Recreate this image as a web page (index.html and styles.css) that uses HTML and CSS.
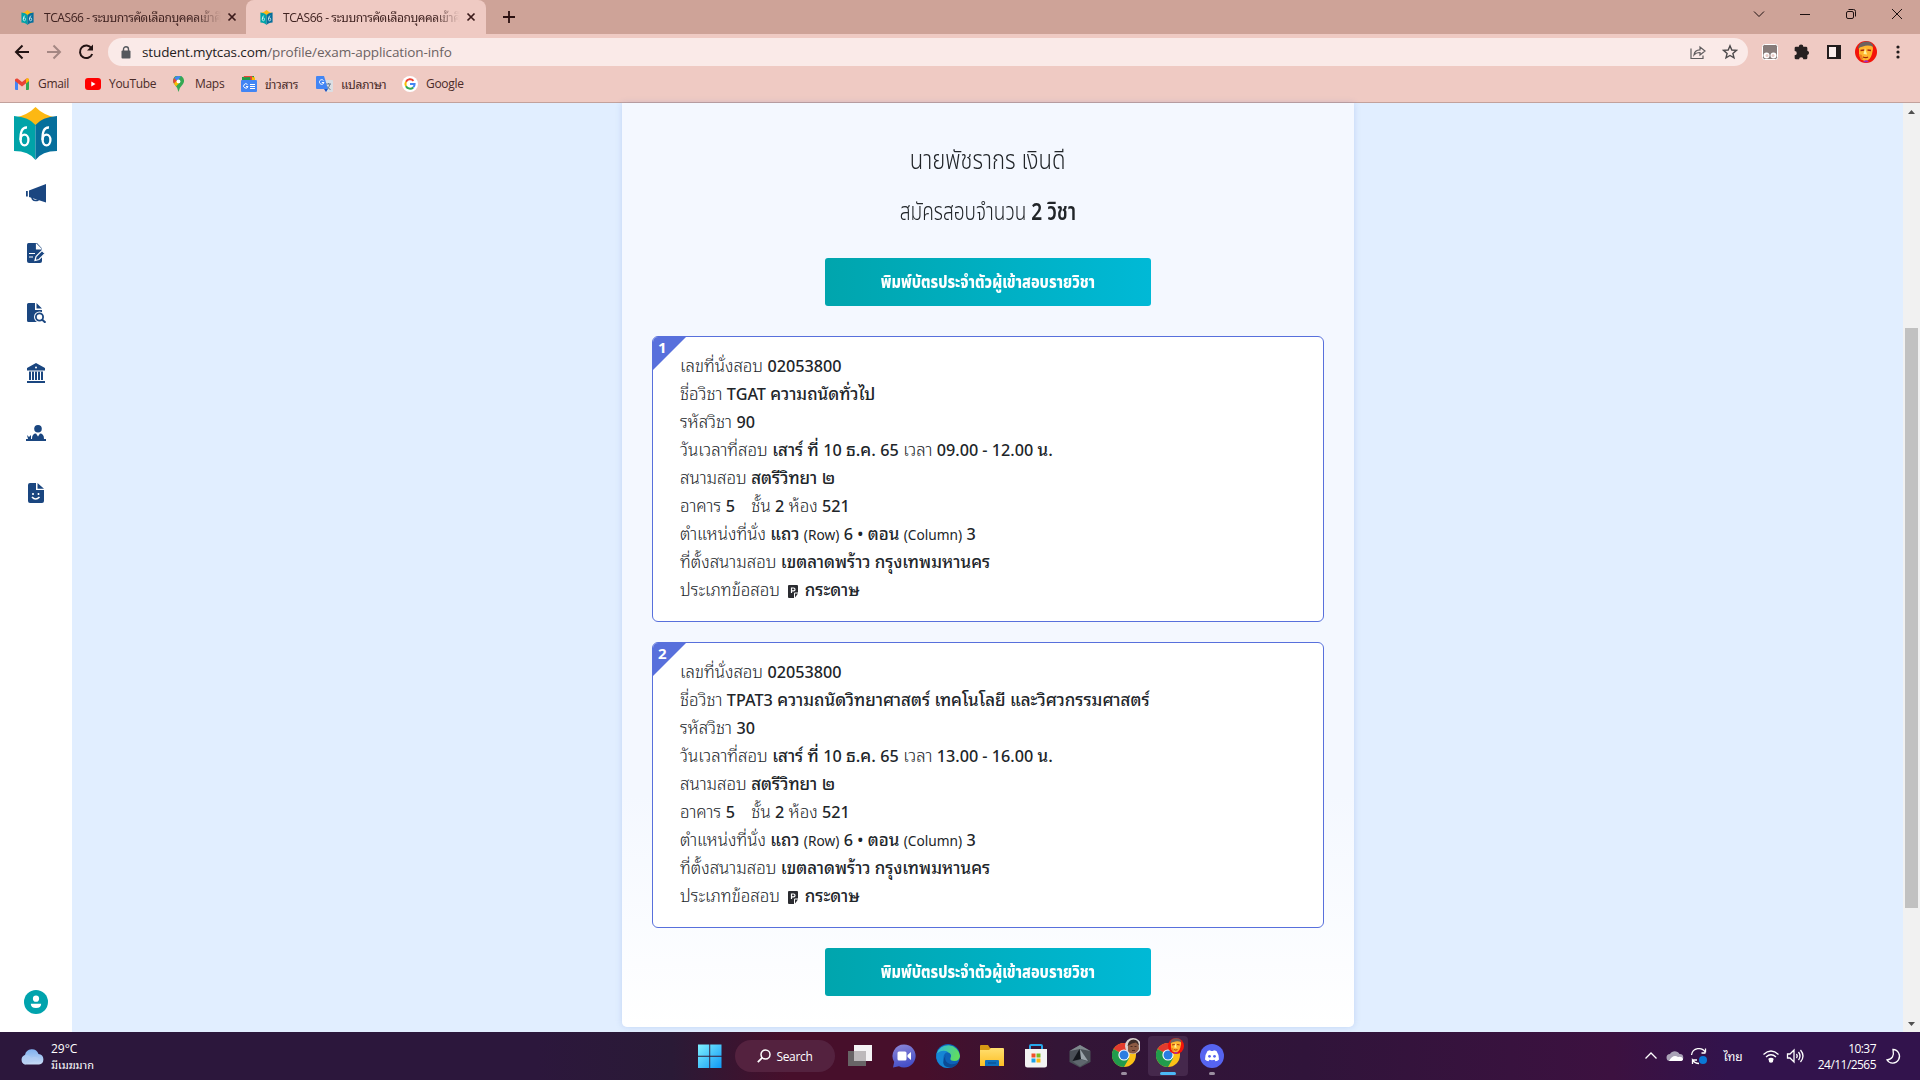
FILE: index.html
```
<!DOCTYPE html>
<html lang="th">
<head>
<meta charset="utf-8">
<title>TCAS66</title>
<link rel="stylesheet" href="styles.css">
</head>
<body>
<svg class="defs" width="0" height="0">
  <defs>
    <linearGradient id="win" x1="0" y1="0" x2="1" y2="1"><stop offset="0" stop-color="#7ff1ff"/><stop offset="1" stop-color="#0f98f5"/></linearGradient>
    <linearGradient id="edgeTop" x1="0" y1="0" x2="1" y2="0.3"><stop offset="0" stop-color="#2bb5e8"/><stop offset="1" stop-color="#60dd60"/></linearGradient>
    <linearGradient id="chat" x1="0" y1="0" x2="0.3" y2="1"><stop offset="0" stop-color="#8f88d8"/><stop offset="1" stop-color="#4650c8"/></linearGradient>
    <linearGradient id="folder" x1="0" y1="0" x2="0" y2="1"><stop offset="0" stop-color="#ffdf70"/><stop offset="1" stop-color="#fdbf25"/></linearGradient>
    <linearGradient id="cloud" x1="0" y1="0" x2="0" y2="1"><stop offset="0" stop-color="#7fb0ee"/><stop offset="1" stop-color="#c9dcf6"/></linearGradient>
    <symbol id="logo" viewBox="0 0 43 53">
      <path d="M0 11 Q14 8 21.500 0 Q29 8 43 11 Q29 11 21.500 19 Q14 11 0 11z" fill="#fdb813"/>
      <path d="M0 9 Q15 10 21.500 18 V53 Q15 44 0 44z" fill="#00a3a8"/>
      <path d="M43 9 Q28 10 21.500 18 V53 Q28 44 43 44z" fill="#066f9c"/>
      <g fill="none" stroke="#fff" stroke-width="2.300"><ellipse cx="10.500" cy="33" rx="3.900" ry="5.300"/><path d="M6.600 33 Q6 20 13 20.500"/><ellipse cx="32.500" cy="33" rx="3.900" ry="5.300"/><path d="M28.600 33 Q28 20 35 20.500"/></g>
    </symbol>
    <symbol id="close" viewBox="0 0 10 10"><path d="M1.500 1.500l7 7m0-7l-7 7" stroke="#3a1a1a" stroke-width="1.700"/></symbol>
    <symbol id="chrome" viewBox="0 0 24 24">
      <circle cx="12" cy="12" r="12" fill="#fbc116"/>
      <path d="M12 12 L1.600 6 A12 12 0 0 1 22.400 6z" fill="#e33b2e"/>
      <path d="M1.600 6 A12 12 0 0 0 12 24 L17.200 15 L12 12z" fill="#219b4c"/>
      <circle cx="12" cy="12" r="5.600" fill="#fff"/><circle cx="12" cy="12" r="4.500" fill="#2a7de1"/>
    </symbol>
    <symbol id="face" viewBox="0 0 22 22">
      <circle cx="11" cy="11" r="11" fill="#f3140a"/>
      <path d="M4 7 Q5 1 12 1.500 Q18 2 18 8 L17 13 Q15 20 10 20 Q5 19 4 13z" fill="#ffb52e"/>
      <path d="M3 8 Q3 1 11 .500 Q17 0 18.500 6 Q13 3.500 8 5.500 Q5 5.500 3 8z" fill="#6d6260"/>
      <path d="M5.500 9.500l4-.500m3 0l3.500.500M8 16q3 1.300 5 0" fill="none" stroke="#a52b0b" stroke-width="1.300"/>
      <path d="M10 7l-1.500 6 3.500.500z" fill="#fff3a0"/>
      <path d="M4 13l3 1 1 4-2 1z" fill="#f08020"/>
      <path d="M8 20.500l3-1.500 3 1.500-3 1z" fill="#a62bb5"/>
    </symbol>
    <symbol id="paper" viewBox="0 0 10 13"><path d="M1 0h8q1 0 1 1v6.500H7q-1 0-1 1V13H1q-1 0-1-1V1q0-1 1-1z" fill="#2b2c31"/><path d="M7 8.500h3L7 12.500z" fill="#2b2c31"/><path d="M3.500 8V3h2q1.500 0 1.500 1.400T5.500 5.800h-2" fill="none" stroke="#fff" stroke-width="1.200"/></symbol>
  </defs>
</svg>

<header class="browser">
  <div class="tabs">
    <div class="tab"><svg width="13" height="15"><use href="#logo"/></svg><span class="tab-title">TCAS66 - ระบบการคัดเลือกบุคคลเข้าศึ</span><svg width="10" height="10"><use href="#close"/></svg></div>
    <div class="tab active"><svg width="13" height="15"><use href="#logo"/></svg><span class="tab-title">TCAS66 - ระบบการคัดเลือกบุคคลเข้าศึ</span><svg width="10" height="10"><use href="#close"/></svg></div>
    <svg class="plus" width="12" height="12" viewBox="0 0 12 12"><path d="M6 0v12M0 6h12" stroke="#2b1010" stroke-width="1.800"/></svg>
    <div class="window-buttons">
      <svg width="46" height="28" viewBox="0 0 46 28"><path d="M18 11.500l5 5 5-5"/></svg>
      <svg width="46" height="28" viewBox="0 0 46 28"><path d="M18 14.500h10"/></svg>
      <svg width="46" height="28" viewBox="0 0 46 28"><rect x="18.500" y="11.500" width="7" height="7" rx="1.500"/><path d="M20.500 9.500h5q2 0 2 2v5"/></svg>
      <svg width="46" height="28" viewBox="0 0 46 28"><path d="M18 9l10 10m0-10l-10 10"/></svg>
    </div>
  </div>
  <div class="toolbar">
    <div class="nav">
      <svg width="32" height="32" viewBox="0 0 32 32"><path d="M23 16H10m6.500-6.500L10 16l6.500 6.500" stroke="#221313"/></svg>
      <svg width="32" height="32" viewBox="0 0 32 32"><path d="M9 16h13m-6.500-6.500L22 16l-6.500 6.500" stroke="#a48783"/></svg>
      <svg width="32" height="32" viewBox="0 0 32 32"><path d="M21.500 12.200A6.300 6.300 0 1 0 22.200 18" stroke="#221313"/><path d="M23 8.500v6h-6z" fill="#221313"/></svg>
    </div>
    <div class="omnibox">
      <svg width="10" height="13" viewBox="0 0 10 13"><rect x="0.500" y="4.500" width="9" height="8" rx="1" fill="#55585d"/><path d="M2.500 5V3.200a2.500 2.500 0 0 1 5 0V5" fill="none" stroke="#55585d" stroke-width="1.400"/></svg>
      <span class="url"><b>student.mytcas.com</b>/profile/exam-application-info</span>
      <svg class="share" width="16" height="16" viewBox="0 0 16 16" fill="none" stroke="#5f5c5e" stroke-width="1.200"><path d="M1 4.500v10h12v-3"/><path d="M4 11q0.500-5 6-5.200V3L15 7l-5 4V8.500Q6 8.500 4 11z"/></svg>
      <svg width="16" height="16" viewBox="0 0 16 16"><path d="M8 1.800l1.800 4.200 4.600.400-3.500 3 1.100 4.500L8 11.500l-4 2.400 1.100-4.500-3.500-3 4.600-.400z" fill="none" stroke="#4d4a4c" stroke-width="1.400"/></svg>
    </div>
    <div class="extensions">
      <svg width="32" height="32" viewBox="0 0 32 32"><rect x="8.500" y="8.500" width="15" height="15" rx="2" fill="#877b79" stroke="#fff"/><circle cx="12.500" cy="19.500" r="3" fill="#fff"/><circle cx="19.500" cy="19.500" r="3" fill="#fff"/><circle cx="13" cy="19.500" r="1.500" fill="#e9cbc6"/><circle cx="19" cy="19.500" r="1.500" fill="#e9cbc6"/></svg>
      <svg width="32" height="32" viewBox="0 0 24 24"><path d="M16 11V9q0-1-1-1h-2a1.700 1.700 0 1 0-3.400 0H7.500q-1 0-1 1v2.300a1.500 1.500 0 0 1 0 3.200v2q0 1 1 1h2.300a1.500 1.500 0 0 1 3.200 0h2q1 0 1-1v-2.200a1.700 1.700 0 0 0 0-3.300z" fill="#262020"/></svg>
      <svg width="32" height="32" viewBox="0 0 32 32"><path d="M10 10h12v12H10z" fill="none" stroke="#221c1c" stroke-width="2"/><path d="M18 9h5v14h-5z" fill="#221c1c"/><path d="M11 11h7v10h-7z" fill="#fbeeec"/></svg>
      <svg width="32" height="32" viewBox="-5 -5 32 32"><use href="#face" width="22" height="22"/></svg>
      <svg width="32" height="32" viewBox="0 0 32 32" fill="#221c1c"><circle cx="16" cy="11" r="1.600"/><circle cx="16" cy="16" r="1.600"/><circle cx="16" cy="21" r="1.600"/></svg>
    </div>
  </div>
  <nav class="bookmarks">
    <a class="bm gmail"><svg width="14" height="12" viewBox="0 0 14 12"><path d="M0 1.500V11q0 1 1 1h2V4z" fill="#4285f4"/><path d="M14 1.500V11q0 1-1 1h-2V4z" fill="#34a853"/><path d="M0 3V1.500Q1 0 2.500.500L7 4 11.500.500Q13 0 14 1.500V3L7 8.500z" fill="#ea4335"/><path d="M11 1l2-1 1 1.500V3l-3 2.500z" fill="#fbbc04"/></svg>Gmail</a>
    <a class="bm youtube"><svg width="16" height="12" viewBox="0 0 16 12"><rect width="16" height="12" rx="3" fill="#f00"/><path d="M6.300 3.500l4.200 2.500-4.200 2.500z" fill="#fff"/></svg>YouTube</a>
    <a class="bm maps"><svg width="11" height="16" viewBox="0 0 11 16"><path d="M5.500 16Q5 12 2 9A5.500 5.500 0 1 1 10 8Q6 12 5.500 16z" fill="#34a853"/><path d="M1.300 2l3 2.500L1.300 8Q-1 5 1.300 2z" fill="#ea4335"/><path d="M1.300 2Q4-1 8 .600L4 5z" fill="#4285f4"/><path d="M1 7.500l3-3 3 1.500-4 4.500z" fill="#fbbc04"/><circle cx="5.500" cy="5.400" r="1.900" fill="#fff"/></svg>Maps</a>
    <a class="bm news"><svg width="16" height="16" viewBox="0 0 16 16"><path d="M1 1l12-1v6H1z" fill="#1c9c4c"/><path d="M3 0h8l2 5H2z" fill="#ea4335"/><path d="M11 1l3 .500V6h-3z" fill="#fbbc04"/><path d="M1 1.500l8-.500 1 5H1z" fill="#1c9c4c"/><rect y="4" width="16" height="12" rx="1" fill="#4285f4"/><path d="M6.500 8.500a2.200 2.200 0 1 0 .500 2H5M9 8.500h5M9 10.500h5M9 12.500h5" fill="none" stroke="#fff"/></svg>ข่าวสาร</a>
    <a class="bm translate"><svg width="17" height="16" viewBox="0 0 17 16"><path d="M7 4h9q1 0 1 1v10q0 1-1 1h-5z" fill="#dbdee3"/><path d="M10 8h5m-2.500-1v1m1.500 0q-1 4-3 5m-.500-3q2 3 4 3.500" stroke="#6b7d92" fill="none"/><path d="M1 0h7l4 13H1q-1 0-1-1V1q0-1 1-1z" fill="#4285f4"/><path d="M7.500 4.500a2.300 2.300 0 1 0 .500 2H5.800" fill="none" stroke="#fff"/><path d="M8 13h4l-2 3z" fill="#1b56c4"/></svg>แปลภาษา</a>
    <a class="bm google"><svg width="16" height="16" viewBox="0 0 16 16"><circle cx="8" cy="8" r="8" fill="#fff"/><g fill="none" stroke-width="2"><path d="M11.500 4.800A4.600 4.600 0 0 0 4 5.800" stroke="#ea4335"/><path d="M4 5.800a4.600 4.600 0 0 0 0 4.400" stroke="#fbbc04"/><path d="M4 10.200a4.600 4.600 0 0 0 7.200 1.200" stroke="#34a853"/><path d="M11.200 11.400A4.600 4.600 0 0 0 12.600 8H8" stroke="#4285f4"/></g></svg>Google</a>
  </nav>
</header>

<div class="page">
  <aside class="sidebar">
    <svg class="brand" width="43" height="53"><use href="#logo"/></svg>
    <svg width="20" height="20" viewBox="0 0 20 20"><path d="M20 1v18.500L3 14V7.500zM0 8h1.800v5.500H0z"/><path d="M6 13.500q0 4 3.500 4t4-2.500" fill="none" stroke="#1a4680" stroke-width="1.600"/></svg>
    <svg width="20" height="20" viewBox="0 0 20 20"><path d="M2.500 0H11l5 5.500V18q0 2-2 2H3q-2 0-2-2V1.500Q1 0 2.500 0z"/><path d="M10.500 1.500V6h4.500zM3 10.500h6M3 14h4" fill="#fff" stroke="#fff" stroke-width="1.200"/><path d="M9 17.500l1-4 6-6 3 3-6 6z" stroke="#fff" stroke-width="1.200"/></svg>
    <svg width="20" height="20" viewBox="0 0 20 20"><path d="M2.500 0H9v7h7v12H2.500Q1 19 1 17.500v-16Q1 0 2.500 0zM10.500 0l5.500 5.500h-5.500z"/><circle cx="13.500" cy="14" r="5.500" fill="#fff"/><circle cx="13.500" cy="14" r="3.600" fill="#fff" stroke="#1a4680" stroke-width="1.800"/><path d="M16 16.500l3.500 3.200" stroke="#1a4680" stroke-width="2"/></svg>
    <svg width="20" height="20" viewBox="0 0 20 20"><path d="M10 0l9 5v2.500H1V5zM3 8.500h14V17H3zM1 18h18v2H1z"/><path d="M5.500 8.500V17M8.500 8.500V17M11.500 8.500V17M14.500 8.500V17" stroke="#fff" stroke-width="1"/><circle cx="10" cy="4.500" r="1" fill="#fff"/></svg>
    <svg width="20" height="20" viewBox="0 0 20 20"><circle cx="12" cy="5.800" r="3.800"/><path d="M6 16q0-5.500 4-5.500l2 3 2-3q4 0 4 5.500h2v2H0v-2h2l-1-4 2 2 2-2v4z"/></svg>
    <svg width="20" height="20" viewBox="0 0 20 20"><path d="M4 0h6v7h8v11q0 2-2 2H4q-2 0-2-2V2q0-2 2-2zM11.500 0L18 5.800h-6.500z"/><path d="M7 10v2m5.500-2v2M6 14q3.500 4 7.500 0" fill="none" stroke="#fff" stroke-width="1.600"/></svg>
    <svg class="account" width="24" height="24" viewBox="0 0 24 24"><circle cx="12" cy="12" r="12" fill="#00a3ad"/><circle cx="12" cy="8.700" r="3.100" fill="#fff"/><path d="M6.800 13.800h10.400q0 4.200-5.200 4.200t-5.200-4.200z" fill="#fff"/></svg>
  </aside>
  <main class="content">
    <section class="panel">
      <h1><span>นายพัชรากร เงินดี</span></h1>
      <h2><span>สมัครสอบจำนวน <b>2 วิชา</b></span></h2>
      <button class="print"><span>พิมพ์บัตรประจำตัวผู้เข้าสอบรายวิชา</span></button>
      <article class="exam">
        <span class="number">1</span>
        <p>เลขที่นั่งสอบ <b class="n">02053800</b></p>
        <p>ชื่อวิชา <b><span class="n">TGAT</span> ความถนัดทั่วไป</b></p>
        <p>รหัสวิชา <b class="n">90</b></p>
        <p>วันเวลาที่สอบ <b>เสาร์ ที่ <span class="n">10</span> ธ.ค. <span class="n">65</span></b> เวลา <b><span class="n">09.00 - 12.00</span> น.</b></p>
        <p>สนามสอบ <b>สตรีวิทยา ๒</b></p>
        <p>อาคาร <b class="n">5</b> <span class="floor">ชั้น</span> <b class="n">2</b> ห้อง <b class="n">521</b></p>
        <p>ตำแหน่งที่นั่ง <b>แถว <small>(Row)</small> <span class="n">6 •</span> ตอน <small>(Column)</small> <span class="n">3</span></b></p>
        <p>ที่ตั้งสนามสอบ <b>เขตลาดพร้าว กรุงเทพมหานคร</b></p>
        <p>ประเภทข้อสอบ <svg class="paper" width="10" height="13"><use href="#paper"/></svg> <b>กระดาษ</b></p>
      </article>
      <article class="exam">
        <span class="number">2</span>
        <p>เลขที่นั่งสอบ <b class="n">02053800</b></p>
        <p>ชื่อวิชา <b><span class="n">TPAT3</span> ความถนัดวิทยาศาสตร์ เทคโนโลยี และวิศวกรรมศาสตร์</b></p>
        <p>รหัสวิชา <b class="n">30</b></p>
        <p>วันเวลาที่สอบ <b>เสาร์ ที่ <span class="n">10</span> ธ.ค. <span class="n">65</span></b> เวลา <b><span class="n">13.00 - 16.00</span> น.</b></p>
        <p>สนามสอบ <b>สตรีวิทยา ๒</b></p>
        <p>อาคาร <b class="n">5</b> <span class="floor">ชั้น</span> <b class="n">2</b> ห้อง <b class="n">521</b></p>
        <p>ตำแหน่งที่นั่ง <b>แถว <small>(Row)</small> <span class="n">6 •</span> ตอน <small>(Column)</small> <span class="n">3</span></b></p>
        <p>ที่ตั้งสนามสอบ <b>เขตลาดพร้าว กรุงเทพมหานคร</b></p>
        <p>ประเภทข้อสอบ <svg class="paper" width="10" height="13"><use href="#paper"/></svg> <b>กระดาษ</b></p>
      </article>
      <button class="print"><span>พิมพ์บัตรประจำตัวผู้เข้าสอบรายวิชา</span></button>
    </section>
  </main>
  <div class="scrollbar">
    <svg width="17" height="17" viewBox="0 0 17 17"><path d="M5 11l3.500-4 3.500 4z" fill="#505050"/></svg>
    <div class="track"><div class="thumb"></div></div>
    <svg width="17" height="17" viewBox="0 0 17 17"><path d="M5 7l3.500 4L12 7z" fill="#505050"/></svg>
  </div>
</div>

<footer class="taskbar">
  <div class="weather">
    <svg width="24" height="16" viewBox="0 0 24 16"><path d="M5 15.500a5 5 0 0 1 0-9.500A7 7 0 0 1 18.500 5a5.300 5.300 0 0 1 .500 10.500z" fill="url(#cloud)"/><path d="M5 15.500a5 5 0 0 1 1-9.500q4 0 5 3 5-3 8 1" fill="#b4cdf2" opacity=".6"/></svg>
    <div>29°C<br><span class="th">มีเมฆมาก</span></div>
  </div>
  <div class="apps">
    <div class="app"><svg width="24" height="24" viewBox="0 0 24 24"><path d="M0 .500h11.300v11.300H0zM12.200.500h11.300v11.300H12.200zM0 12.700h11.300V24H0zM12.200 12.700h11.300V24H12.200z" fill="url(#win)"/></svg></div>
    <div class="search"><svg width="14" height="14" viewBox="0 0 14 14"><circle cx="8.500" cy="5.500" r="4.500" fill="none" stroke="#fff" stroke-width="1.500"/><path d="M5.300 8.700L.800 13.200" stroke="#fff" stroke-width="1.800"/></svg><span>Search</span></div>
    <div class="app"><svg width="24" height="24" viewBox="0 0 24 24"><path d="M6 1h18v16H6z" fill="#f4f2f4"/><path d="M0 7h18v15H0z" fill="#686466"/><path d="M6 7h12v10H6z" fill="#bdb9bb"/></svg></div>
    <div class="app"><svg width="24" height="24" viewBox="0 0 24 24"><path d="M12 .500a11.500 11.500 0 1 1-5 21.800L1 23.500 2.200 18A11.500 11.500 0 0 1 12 .500z" fill="url(#chat)"/><rect x="5.500" y="7.500" width="9" height="9" rx="1.500" fill="#fff"/><path d="M15.500 11l3.500-3v8l-3.500-3z" fill="#fff"/></svg></div>
    <div class="app"><svg width="24" height="24" viewBox="0 0 24 24"><circle cx="12" cy="12" r="12" fill="#0d62b8"/><path d="M.500 10A12 12 0 0 1 24 12q-.500 5-5.500 5-5 0-4-3 1.500-3-1-5Q7 5 .500 10z" fill="url(#edgeTop)"/><path d="M.500 10Q6 4.500 12 8q-5 1-4.500 7t7 8.700Q3 25.500.300 14z" fill="#1686d4"/><path d="M10 10.500q-3 7 4 9.500 4.500 1 8-1.500-4 7-11 4.500T10 10.500z" fill="#0b4a94"/></svg></div>
    <div class="app"><svg width="24" height="24" viewBox="0 0 24 24"><path d="M0 2q0-1 1-1h7l2 3h13v6H0z" fill="#d69a14"/><path d="M0 6h9l2-2h12q1 0 1 1v17H0z" fill="url(#folder)"/><path d="M5 22v-5q0-1 1-1h12q1 0 1 1v5z" fill="#0f6fbe"/><path d="M8 19h8" stroke="#0a4a88"/></svg></div>
    <div class="app"><svg width="24" height="24" viewBox="0 0 24 24"><path d="M6 6V2q0-1 1-1h10q1 0 1 1v4" fill="none" stroke="#26a7ea" stroke-width="2"/><path d="M1 5h22v16q0 2.500-2.500 2.500h-17Q1 23.500 1 21z" fill="#f3f3f3"/><path d="M7.500 9.500h4v4h-4z" fill="#f0502b"/><path d="M12.500 9.500h4v4h-4z" fill="#7fba20"/><path d="M7.500 14.500h4v4h-4z" fill="#1ba2e8"/><path d="M12.500 14.500h4v4h-4z" fill="#fbb913"/></svg></div>
    <div class="app"><svg width="24" height="24" viewBox="0 0 24 24"><path d="M12 1l10.500 6v11L12 23.500 1.500 18V7z" fill="#4a5057"/><path d="M12 1l10.500 6L12 5 1.500 7z" fill="#7f888e"/><path d="M11.500 5L4.500 17l8.500-2z" fill="#14181d"/><path d="M12 5l8 12-7-2z" fill="#9aa3aa"/><path d="M4.500 17.500l8.500-2 7 2-8 5z" fill="#5f676e"/></svg></div>
    <div class="app running"><svg width="32" height="30" viewBox="0 0 32 30"><use href="#chrome" x="4" y="5" width="24" height="24"/><circle cx="25" cy="8" r="8" fill="#d8d2d0"/><path d="M20 13q-1-11 5-11t6 9q-3 5-6 4.500-4 0-5-2.500z" fill="#8c5a43"/><path d="M19.500 8q1-6.500 6-6.500t5.500 6l-3-3-4 1z" fill="#3c2b27"/><path d="M22.500 8.500h2m2 0h2M24 12.500h3" stroke="#4a2a20"/></svg></div>
    <div class="app running current"><svg width="32" height="30" viewBox="0 0 32 30"><use href="#chrome" x="4" y="5" width="24" height="24"/><use href="#face" x="16" y="0" width="16" height="16"/></svg></div>
    <div class="app running"><svg width="24" height="24" viewBox="0 0 24 24"><circle cx="12" cy="12" r="12" fill="#5664f0"/><path d="M7.500 7q2-1 2.800-.800l.400.800h2.600l.400-.800q1 0 2.800.800 2.800 4 2.500 8.500-1.500 1.500-3.500 1.800l-.900-1.500q-2.600.700-5.200 0l-.900 1.500q-2-.300-3.500-1.800Q4.700 11 7.500 7z" fill="#fff"/><circle cx="9.500" cy="12.300" r="1.400" fill="#5664f0"/><circle cx="14.500" cy="12.300" r="1.400" fill="#5664f0"/></svg></div>
  </div>
  <div class="tray">
    <svg width="24" height="24" viewBox="0 0 24 24"><path d="M6.500 14.500l5.500-5.500 5.500 5.500"/></svg>
    <svg width="24" height="24" viewBox="0 0 24 24"><path d="M7 17a3.500 3.500 0 0 1 0-7 5.500 5.500 0 0 1 9.500 0 3.500 3.500 0 0 1 .500 7z" fill="#a9a2b6" stroke="none"/><path d="M6 17q4-7 9-4 4-1 5 2 0 2-3 2z" fill="#fff" stroke="none"/></svg>
    <svg width="24" height="24" viewBox="0 0 24 24"><path d="M4.500 11A7.500 7.500 0 0 1 18.500 8.500V4.500m0 4.500h-4M12 19.500Q8 19.500 5.500 16v4m0-4h4.500"/><circle cx="16" cy="16" r="4" fill="#0a78d7" stroke="none"/></svg>
    <span class="lang">ไทย</span>
    <svg width="24" height="24" viewBox="0 0 24 24"><path d="M4.500 10.500q7.500-7 15 0M7 13q5-4.500 10 0M9.500 15.500q2.500-2 5 0"/><circle cx="12" cy="16.500" r="1.600" fill="#fff"/></svg>
    <svg width="24" height="24" viewBox="0 0 24 24"><path d="M4.500 10H7l4-4v12l-4-4H4.500zM13.500 10q1.500 2 0 4M15.500 8q3 4 0 8M17.500 6q5 6 0 12"/></svg>
    <div class="clock">10:37<br>24/11/2565</div>
    <svg class="moon" width="24" height="24" viewBox="0 0 24 24"><path d="M12 5.500a6.800 6.800 0 1 1-6 10.500q8-1 6-10.500z"/></svg>
  </div>
</footer>
</body>
</html>
```
FILE: styles.css
```
* { box-sizing: border-box; }
body {
  margin: 0;
  width: 1920px;
  height: 1080px;
  overflow: hidden;
  display: flex;
  flex-direction: column;
  font-family: "Open Sans", "Noto Sans Thai Looped", "Noto Sans", sans-serif;
}
svg { display: block; flex: none; }
.defs { position: absolute; }
p, h1, h2 { margin: 0; }

/* browser chrome */
.browser {
  height: 103px;
  background: #efcac3;
  border-bottom: 1px solid #c2a19c;
  color: #4a2b29;
  font-size: 12px;
}
.tabs { display: flex; height: 34px; background: #cea398; }
.tab {
  display: flex;
  align-items: center;
  width: 240px;
  padding: 0 10px 0 14px;
  margin-left: 7px;
  color: #3f2220;
}
.tab + .tab { margin-left: -1px; }
.tab.active { background: #efcac3; border-radius: 8px 8px 0 0; }
.tab-title {
  width: 178px;
  margin: 0 6px 2px 10px;
  white-space: nowrap;
  letter-spacing: -0.420px;
  mask-image: linear-gradient(90deg, #000 85%, transparent);
}
.plus { align-self: center; margin-left: 17px; }
.window-buttons { display: flex; margin-left: auto; }
.window-buttons svg { fill: none; stroke: #1d1010; }
.toolbar { display: flex; align-items: center; height: 36px; padding: 0 6px; }
.nav { display: flex; }
.nav path { fill: none; stroke-width: 2; }
.nav path[fill] { fill: #221313; stroke: none; }
.omnibox {
  display: flex;
  align-items: center;
  width: 1640px;
  height: 28px;
  padding: 0 10px 0 13px;
  margin-left: 6px;
  border-radius: 14px;
  background: #faeae8;
}
.url { margin-left: 11px; font-size: 13.500px; color: #6c6263; letter-spacing: -0.110px; }
.url b { font-weight: 400; color: #241c1c; }
.share { margin: 0 16px 0 auto; }
.extensions { display: flex; margin-left: 6px; }
.bookmarks { display: flex; align-items: center; height: 27px; padding-left: 15px; }
.bm { display: flex; align-items: center; gap: 8px; height: 28px; letter-spacing: -0.300px; }
.gmail { width: 70px; gap: 9px; }
.youtube { width: 88px; }
.maps { width: 68px; gap: 11px; }
.news { width: 75px; }
.translate { width: 86px; }

/* site */
.page { display: flex; height: 929px; background: #e1eeff; }
.sidebar {
  display: flex;
  flex-direction: column;
  align-items: center;
  gap: 40px;
  width: 72px;
  padding: 4px 0 18px;
  background: #fff;
  fill: #1a4680;
}
.brand { margin: 0 1px -17px 0; }
.account { margin-top: auto; }
.content { flex: 1; display: flex; padding-left: 550px; }
.panel {
  display: flex;
  flex-direction: column;
  align-items: center;
  width: 732px;
  height: 924px;
  padding: 0 30px;
  border-radius: 0 0 5px 5px;
  background: linear-gradient(#f4f8ff 75%, #fff);
  box-shadow: 0 0 6px rgba(80, 120, 200, .22);
  color: #212529;
}
h1, h2, .print {
  font-family: "Noto Sans Thai", "Noto Sans", sans-serif;
  white-space: nowrap;
}
h1 span { display: inline-block; transform: scaleX(.85); }
h2 span { display: inline-block; transform: scaleX(.795); }
.print span { display: inline-block; transform: scaleX(.806); }
h1 { height: 52px; margin-top: 32px; font-size: 26px; line-height: 52px; font-weight: 300; }
h2 { height: 52px; font-size: 24px; line-height: 52px; font-weight: 300; }
h2 b { font-weight: 600; }
.print {
  flex: none;
  display: flex;
  align-items: center;
  justify-content: center;
  width: 326px;
  height: 48px;
  margin-top: 19px;
  padding: 1px 0 0;
  border: 0;
  border-radius: 3px;
  background: linear-gradient(90deg, #00a5ad, #00b9d6);
  color: #fff;
  font-size: 18px;
  font-weight: 800;
}
.exam + .print { margin-top: 20px; }
.exam {
  position: relative;
  width: 672px;
  height: 286px;
  margin-top: 30px;
  padding: 15px 27px;
  border: 1px solid #5870dc;
  border-radius: 6px;
  background: #fff;
  font-family: "Noto Sans", "Noto Sans Thai Looped", sans-serif;
  font-size: 16.900px;
  font-weight: 300;
  overflow: hidden;
}
.exam + .exam { margin-top: 20px; }
.exam p { height: 28px; line-height: 28px; white-space: nowrap; }
.exam b { font-weight: 500; }
.exam .n { font-size: 16.200px; }
.exam small { font-size: 13.700px; font-weight: 400; }
.floor { margin-left: 12px; }
.paper { display: inline-block; margin: 0 2px 0 4px; vertical-align: -2px; }
.number {
  position: absolute;
  left: 0;
  top: 0;
  width: 33px;
  height: 33px;
  padding-left: 5px;
  background: #5870dc;
  clip-path: polygon(0 0, 100% 0, 0 100%);
  color: #fff;
  font-size: 15px;
  line-height: 21px;
  font-weight: 700;
}
.scrollbar { display: flex; flex-direction: column; width: 17px; background: #f1f1f1; }
.track { flex: 1; padding: 208px 2px 0; }
.thumb { height: 580px; background: #c1c1c1; }

/* taskbar */
.taskbar {
  display: flex;
  height: 48px;
  background: linear-gradient(90deg, #2c173c 0, #2c173c 28%, #2a1a36 35%, #470f2b 41%, #470f2b 48%, #331536 55%, #30143a 68%, #3c1140 84%, #32134c 90%, #32134c);
  color: #fff;
  font-size: 12px;
  line-height: 16px;
}
.weather { display: flex; align-items: center; gap: 7px; width: 688px; padding: 1px 0 0 20px; }
.weather .th { font-size: 11px; }
.apps { display: flex; align-items: center; }
.app {
  display: flex;
  flex-direction: column;
  align-items: center;
  justify-content: center;
  width: 40px;
  height: 40px;
  margin: 0 2px;
  border-radius: 4px;
}
.app.running { justify-content: flex-end; padding-bottom: 1px; }
.app.running::after { content: ""; width: 6px; height: 3px; margin-top: 4px; border-radius: 2px; background: #9b8fa0; }
.app.current { background: #45284c; }
.app.current::after { width: 16px; background: #4cb8f8; }
.search {
  display: flex;
  align-items: center;
  justify-content: center;
  gap: 5px;
  width: 100px;
  height: 32px;
  margin: 0 3px;
  border-radius: 16px;
  background: #54223f;
}
.search span { padding-top: 2px; letter-spacing: -0.300px; }
.tray { display: flex; align-items: center; margin-left: auto; padding-right: 15px; }
.tray svg { fill: none; stroke: #fff; stroke-width: 1.300; }
.lang { width: 48px; padding: 1px 4px 0 0; text-align: center; }
.clock { width: 69px; padding-top: 1px; text-align: right; letter-spacing: -0.550px; }
.tray .moon { margin-left: 5px; }
```
